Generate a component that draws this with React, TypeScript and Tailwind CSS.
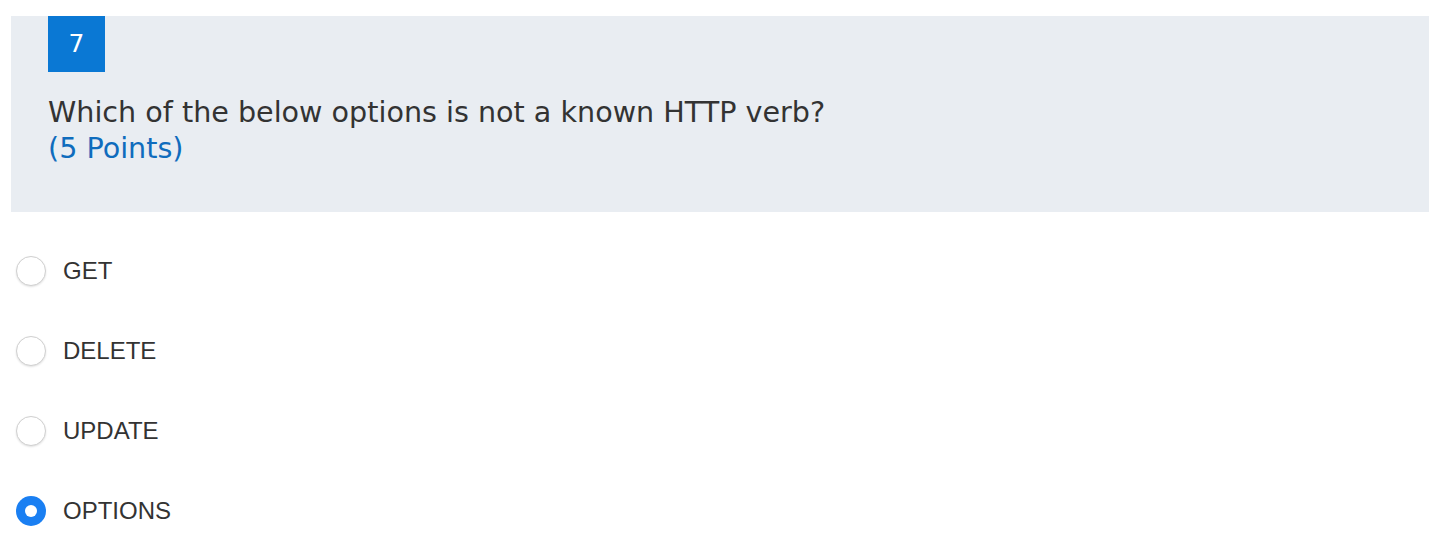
const options = [
  { label: "GET", checked: false },
  { label: "DELETE", checked: false },
  { label: "UPDATE", checked: false },
  { label: "OPTIONS", checked: true },
];

function Radio({ checked }: { checked: boolean }) {
  if (checked) {
    return (
      <span className="flex h-[30px] w-[30px] items-center justify-center rounded-full bg-[#1a7ff2]">
        <span className="h-[12px] w-[12px] rounded-full bg-white" />
      </span>
    );
  }
  return (
    <span className="h-[30px] w-[30px] rounded-full border border-[#d0d0d0] bg-white shadow-[0_1px_2px_rgba(0,0,0,0.12)]" />
  );
}

export default function App() {
  return (
    <div className="min-h-[556px] w-[1446px] bg-white pt-4">
      <div className="mx-[11px] w-[1418px] bg-[#e9edf2] px-[37px] pb-[46px]">
        <div className="flex h-[56px] w-[57px] items-center justify-center bg-[#0a78d4] font-['DejaVu_Sans',sans-serif] text-[25px] text-white">
          7
        </div>
        <div className="mt-[22px] font-['DejaVu_Sans',sans-serif] text-[28.6px] leading-[36px] text-[#333333]">
          <div>Which of the below options is not a known HTTP verb?</div>
          <div className="text-[#0f6cbd]">(5 Points)</div>
        </div>
      </div>
      <div className="mt-[19px] flex flex-col">
        {options.map((o) => (
          <div key={o.label} className="flex h-[80px] items-center pl-4">
            <Radio checked={o.checked} />
            <span className="ml-[17px] font-['Liberation_Sans',Arial,sans-serif] text-[24px] text-[#333333]">
              {o.label}
            </span>
          </div>
        ))}
      </div>
    </div>
  );
}
